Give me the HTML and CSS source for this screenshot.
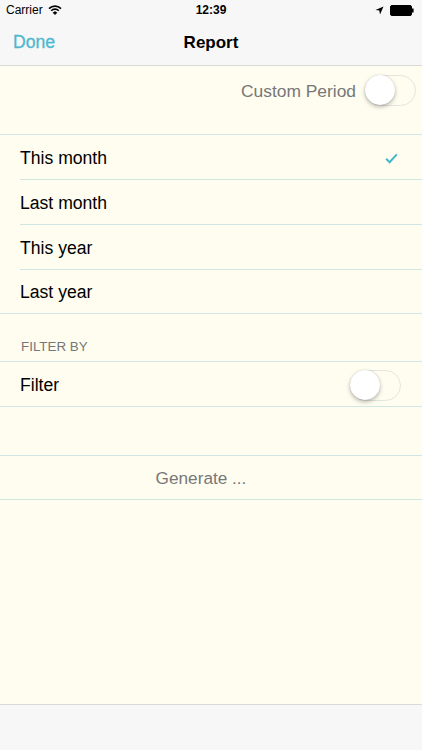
FILE: index.html
```html
<!DOCTYPE html>
<html>
<head>
<meta charset="utf-8">
<link rel="stylesheet" href="styles.css">
</head>
<body>
<div class="screen">
  <header class="top">
    <div class="status">
      <div class="status-left">
        <span>Carrier</span>
        <svg class="wifi" width="14" height="10" viewBox="0 0 14 10">
          <path d="M1 3.6 A8.5 8.5 0 0 1 13 3.6" fill="none" stroke="#000" stroke-width="1.6"/>
          <path d="M3.2 5.7 A5.3 5.3 0 0 1 10.8 5.7" fill="none" stroke="#000" stroke-width="1.6"/>
          <path d="M5.2 7.7 A2.4 2.4 0 0 1 8.8 7.7 L7 9.6 Z" fill="#000" stroke="#000" stroke-width="0.8"/>
        </svg>
      </div>
      <div class="status-time">12:39</div>
      <div class="status-right">
        <svg width="9" height="9" viewBox="0 0 9 9"><path d="M8.5 0.5 L0.5 4 L4.3 4.6 L5 8.5 Z" fill="#000"/></svg>
        <svg width="24" height="11" viewBox="0 0 24 11"><rect x="0.5" y="0.5" width="21" height="10" rx="1.5" fill="#000" stroke="#000"/><rect x="22" y="3.5" width="1.6" height="4" fill="#000"/></svg>
      </div>
    </div>
    <nav class="navbar">
      <span class="nav-done">Done</span>
      <span class="nav-title">Report</span>
      <span class="nav-spacer"></span>
    </nav>
  </header>

  <main class="content">
    <div class="custom-row">
      <span class="custom-label">Custom Period</span>
      <span class="switch"><span class="knob"></span></span>
    </div>

    <ul class="group">
      <li class="row"><span>This month</span>
        <svg class="check" width="13" height="11" viewBox="0 0 13 11"><path d="M1.2 5.8 L4.6 9.2 L11.8 1.4" fill="none" stroke="#45b6c9" stroke-width="2"/></svg>
      </li>
      <li class="row"><span>Last month</span></li>
      <li class="row"><span>This year</span></li>
      <li class="row last short"><span>Last year</span></li>
    </ul>

    <div class="section-head">FILTER BY</div>
    <ul class="group">
      <li class="row last"><span>Filter</span><span class="switch"><span class="knob"></span></span></li>
    </ul>

    <div class="gap"></div>
    <ul class="group">
      <li class="row last short generate"><span>Generate ...</span></li>
    </ul>
  </main>

  <footer class="toolbar"></footer>
</div>
</body>
</html>
```

FILE: styles.css
```css
* { box-sizing: border-box; }
html, body { margin: 0; padding: 0; }
body {
  font-family: "Liberation Sans", Arial, sans-serif;
  background: #fffdf0;
  color: #000;
}
.screen {
  width: 422px;
  height: 750px;
  display: flex;
  flex-direction: column;
  overflow: hidden;
}
.top {
  background: #f7f7f7;
  border-bottom: 1px solid #d9d9d6;
}
.status {
  height: 20px;
  display: flex;
  align-items: center;
  justify-content: space-between;
  padding: 0 8px 0 6px;
  font-size: 12px;
  position: relative;
}
.status-left { display: flex; align-items: center; gap: 5px; }
.status-time {
  position: absolute;
  left: 0; right: 0;
  text-align: center;
  font-weight: bold;
  font-size: 12px;
}
.status-right { display: flex; align-items: center; gap: 6px; }
.navbar {
  height: 45px;
  display: flex;
  align-items: center;
  justify-content: space-between;
  padding: 0 13px;
  font-size: 17px;
}
.nav-done { color: #4db8cf; font-size: 17.6px; width: 60px; -webkit-text-stroke: 0.3px #4db8cf; }
.nav-title { font-weight: bold; }
.nav-spacer { width: 60px; }

.content {
  flex: 1;
  display: flex;
  flex-direction: column;
}
.custom-row {
  height: 69px;
  display: flex;
  align-items: flex-start;
  justify-content: flex-end;
  gap: 9px;
  padding: 9px 6px 0 0;
  border-bottom: 1px solid #cfe6e4;
}
.custom-label {
  color: #777;
  font-size: 17.4px;
  line-height: 31px;
  padding-top: 1px;
}
.switch {
  width: 51px;
  height: 31px;
  border-radius: 16px;
  border: 1.5px solid #e4e4e0;
  background: #fffdf0;
  position: relative;
  display: inline-block;
  flex: none;
}
.knob {
  position: absolute;
  left: -1px;
  top: -1px;
  width: 30px;
  height: 30px;
  border-radius: 50%;
  background: #fff;
  box-shadow: 0 2px 4px rgba(0,0,0,0.28), 0 0 1px rgba(0,0,0,0.2);
}
.group {
  list-style: none;
  margin: 0;
  padding: 0 0 0 20px;
  border-bottom: 1px solid #cfe6e4;
}
.row {
  height: 45px;
  display: flex;
  align-items: center;
  justify-content: space-between;
  padding-right: 21px;
  padding-top: 2px;
  font-size: 17.6px;
  border-bottom: 1px solid #cfe6e4;
}
.row.last { border-bottom: none; height: 44px; }
.row.last.short { height: 43px; }
.check { margin-right: 3px; }
.section-head {
  height: 48px;
  padding: 0 0 7px 21px;
  display: flex;
  align-items: flex-end;
  font-size: 13.4px;
  color: #777;
  border-bottom: 1px solid #cfe6e4;
}
.gap {
  height: 49px;
  border-bottom: 1px solid #cfe6e4;
}
.generate {
  justify-content: center;
  color: #777;
  padding-right: 40px;
  font-size: 17.2px;
}
.toolbar {
  height: 46px;
  flex: none;
  background: #f7f7f7;
  border-top: 1px solid #dadad6;
}
```
